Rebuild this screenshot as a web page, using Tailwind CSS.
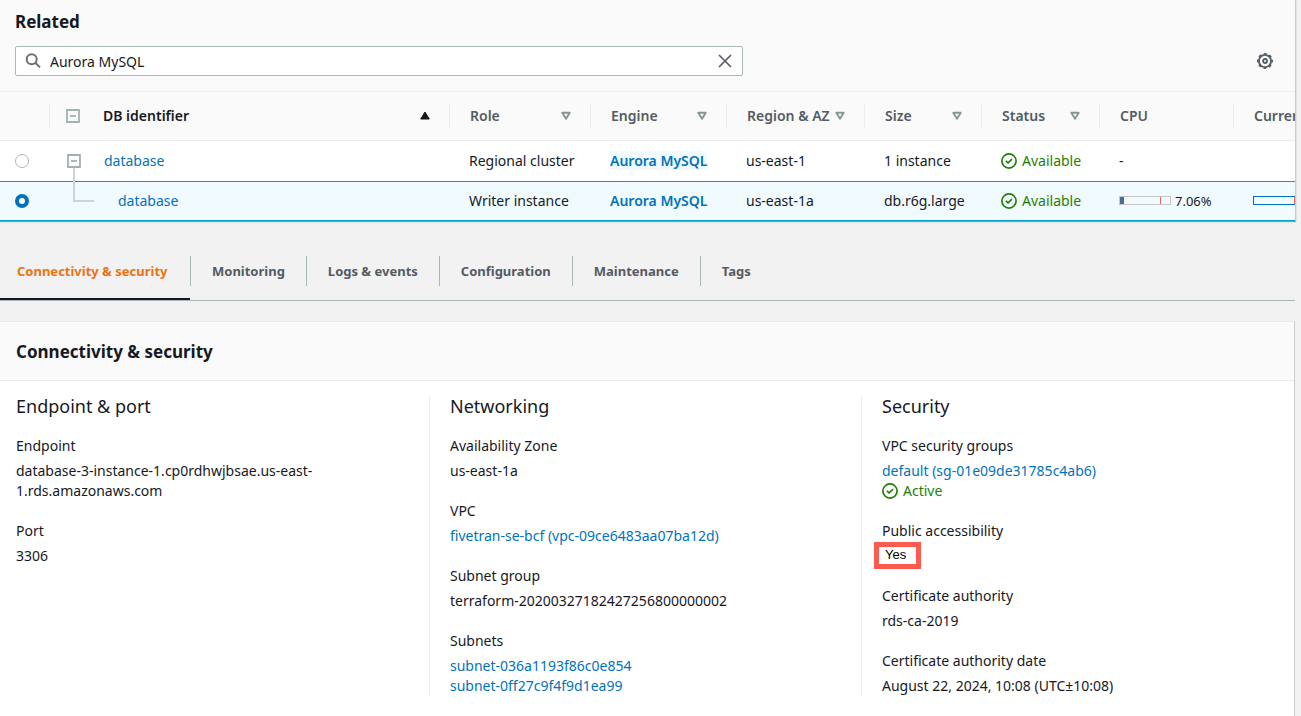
<!DOCTYPE html>
<html lang="en">
<head>
<meta charset="utf-8">
<title>RDS databases</title>
<meta name="viewport" content="width=device-width, initial-scale=1">
<script src="https://cdn.jsdelivr.net/npm/@tailwindcss/browser@4"></script>
</head>
<body class="min-h-screen overflow-x-hidden bg-[#f2f2f2] pr-[5px] font-['Noto_Sans','Open_Sans',sans-serif] text-sm leading-5 text-[#16191f]">
<svg class="hidden" aria-hidden="true">
  <symbol id="ok" viewBox="0 0 16 16"><circle cx="8" cy="8" r="7.1" fill="none" stroke="currentColor" stroke-width="1.7"/><path d="M4.8 7.8l2.3 2.1 3.9-3.7" fill="none" stroke="currentColor" stroke-width="1.6"/></symbol>
  <symbol id="sort" viewBox="0 0 10 9"><path d="M1.3 1.7h7.4L5 7.7z" fill="none" stroke="currentColor" stroke-width="1.9" stroke-linejoin="round"/></symbol>
  <symbol id="minus" viewBox="0 0 14 14"><path d="M1 1h12v12H1z" fill="none" stroke="currentColor" stroke-width="1.8"/><path d="M4 7h6" stroke="currentColor" stroke-width="1.8"/></symbol>
</svg>

<section class="overflow-hidden border-r border-[#c6cccd] bg-white shadow-[0_1px_1px_0_rgba(0,28,36,0.4)]">
  <header class="border-b border-[#eaeded] bg-[#fafafa] pt-2.5 pr-5 pb-[15px] pl-[15px]">
    <h2 class="text-[17px] leading-6 font-bold">Related</h2>
    <div class="mt-3 flex items-center justify-between">
      <div class="flex h-[30px] w-full max-w-[728px] items-center rounded-xs border border-[#aab7b8] bg-white pr-2.5 pl-[9px]">
        <svg class="size-4 shrink-0 text-[#687078]" viewBox="0 0 16 16" fill="none" stroke="currentColor" stroke-width="2"><circle cx="6.7" cy="6.2" r="5"/><path d="M10.3 9.8l4.7 4.6"/></svg>
        <input type="text" aria-label="Filter databases" value="Aurora MySQL" class="ml-[9px] h-full min-w-0 grow bg-transparent pt-px outline-none">
        <button aria-label="Clear filter" class="text-[#545b64]"><svg class="size-3.5" viewBox="0 0 14 14" fill="none" stroke="currentColor" stroke-width="1.6"><path d="M1 1l12 12M13 1L1 13"/></svg></button>
      </div>
      <button aria-label="Preferences" class="mr-0.5 text-[#545b64]"><svg class="size-4" viewBox="0 0 16 16" fill="none" stroke="currentColor"><circle cx="8" cy="8" r="6.1" stroke-width="1.9"/><circle cx="8" cy="8" r="7.3" stroke-width="1.4" stroke-dasharray="2.9 2.833" stroke-dashoffset="1.45"/><circle cx="8" cy="8" r="2" stroke-width="1.8"/></svg></button>
    </div>
  </header>
  <table class="w-[1400px] table-fixed border-collapse text-left whitespace-nowrap">
    <colgroup><col class="w-[49px]"><col class="w-[400px]"><col class="w-[141px]"><col class="w-[136px]"><col class="w-[138px]"><col class="w-[117px]"><col class="w-[118px]"><col class="w-[134px]"><col></colgroup>
    <thead class="border-b border-[#eaeded] bg-[#fafafa] text-[#545b64]">
      <tr class="h-12 *:font-semibold">
        <th class="p-0" aria-label="Selection"></th>
        <th class="p-0"><div class="flex h-6 items-center border-l border-[#eaeded] pr-[19px] pl-4 text-[#16191f]"><button aria-label="Collapse all" class="text-[#a3b1b2]"><svg class="size-3.5"><use href="#minus"/></svg></button><span class="ml-[23px] grow">DB identifier</span><svg class="h-[9px] w-2.5" viewBox="0 0 10 9"><path d="M5 1l4.3 7H.7z" fill="currentColor" stroke="currentColor" stroke-linejoin="round"/></svg></div></th>
        <th class="p-0"><div class="flex h-6 items-center justify-between border-l border-[#eaeded] pr-[19px] pl-5">Role<svg class="h-[9px] w-2.5 text-[#879596]"><use href="#sort"/></svg></div></th>
        <th class="p-0"><div class="flex h-6 items-center justify-between border-l border-[#eaeded] pr-[19px] pl-5">Engine<svg class="h-[9px] w-2.5 text-[#879596]"><use href="#sort"/></svg></div></th>
        <th class="p-0"><div class="flex h-6 items-center justify-between border-l border-[#eaeded] pr-[19px] pl-5">Region &amp; AZ<svg class="h-[9px] w-2.5 text-[#879596]"><use href="#sort"/></svg></div></th>
        <th class="p-0"><div class="flex h-6 items-center justify-between border-l border-[#eaeded] pr-[19px] pl-5">Size<svg class="h-[9px] w-2.5 text-[#879596]"><use href="#sort"/></svg></div></th>
        <th class="p-0"><div class="flex h-6 items-center justify-between border-l border-[#eaeded] pr-[19px] pl-5">Status<svg class="h-[9px] w-2.5 text-[#879596]"><use href="#sort"/></svg></div></th>
        <th class="p-0"><div class="flex h-6 items-center border-l border-[#eaeded] pl-5">CPU</div></th>
        <th class="p-0"><div class="flex h-6 items-center border-l border-[#eaeded] pl-5">Current activity</div></th>
      </tr>
    </thead>
    <tbody>
      <tr class="h-[41px]">
        <td class="p-0 pl-[15px]"><input type="radio" name="db" aria-label="Select cluster" class="block size-3.5 appearance-none rounded-full border border-[#aab7b8] bg-white"></td>
        <td class="p-0 pl-[18px]"><div class="flex items-center"><button aria-label="Collapse cluster" class="relative text-[#a3b1b2]"><svg class="size-3.5"><use href="#minus"/></svg><span class="absolute top-3.5 left-1.5 h-[34px] w-[21px] border-b-2 border-l-2 border-[#ccd5d5]"></span></button><a href="#" class="ml-[23px] text-[#0073bb]">database</a></div></td>
        <td class="p-0 pl-5">Regional cluster</td>
        <td class="p-0 pl-5"><a href="#" class="bg-[#f1faff] font-semibold text-[#0073bb]">Aurora MySQL</a></td>
        <td class="p-0 pl-5">us-east-1</td>
        <td class="p-0 pl-5">1 instance</td>
        <td class="p-0 pl-5"><div class="flex items-center gap-[5px] text-[#1d8102]"><svg class="size-4"><use href="#ok"/></svg>Available</div></td>
        <td class="p-0 pl-5">-</td>
        <td></td>
      </tr>
      <tr class="h-[39px] border-y border-[#00a1c9] bg-[#f1faff]">
        <td class="p-0 pl-[15px]"><input type="radio" name="db" checked aria-label="Select writer instance" class="block size-3.5 appearance-none rounded-full border-4 border-[#0073bb] bg-white"></td>
        <td class="p-0 pl-[69px]"><a href="#" class="text-[#0073bb]">database</a></td>
        <td class="p-0 pl-5">Writer instance</td>
        <td class="p-0 pl-5"><a href="#" class="font-semibold text-[#0073bb]">Aurora MySQL</a></td>
        <td class="p-0 pl-5">us-east-1a</td>
        <td class="p-0 pl-5">db.r6g.large</td>
        <td class="p-0 pl-5"><div class="flex items-center gap-[5px] text-[#1d8102]"><svg class="size-4"><use href="#ok"/></svg>Available</div></td>
        <td class="p-0 pl-5"><div class="flex items-center gap-1"><div class="flex h-[9px] w-[52px] justify-between border border-[#c6c6c6]"><span class="w-1 bg-[#486d96]"></span><span class="mr-[9px] w-px bg-[#f0625a]"></span></div><span class="text-[13px]">7.06%</span></div></td>
        <td class="p-0 pl-5"><div class="flex h-[9px] w-[52px] border border-[#0073bb]"><span class="ml-10 w-px bg-[#f0625a]"></span></div></td>
      </tr>
    </tbody>
  </table>
</section>

<nav class="mt-[23px] mr-px flex border-b border-[#aab7b8] pt-3 text-[13px] text-[#545b64]" aria-label="Database details">
  <a href="#" class="h-11 w-[190px] border-b-2 border-[#16191f] pl-[17px] leading-[30px] font-bold text-[#ec7211]">Connectivity &amp; security</a>
  <a href="#" class="h-[30px] border-l border-[#aab7b8] px-[21px] leading-[30px] font-bold">Monitoring</a>
  <a href="#" class="h-[30px] border-l border-[#aab7b8] px-[21px] leading-[30px] font-bold">Logs &amp; events</a>
  <a href="#" class="h-[30px] border-l border-[#aab7b8] px-[21px] leading-[30px] font-bold">Configuration</a>
  <a href="#" class="h-[30px] border-l border-[#aab7b8] px-[21px] leading-[30px] font-bold">Maintenance</a>
  <a href="#" class="h-[30px] border-l border-[#aab7b8] px-[21px] leading-[30px] font-bold">Tags</a>
</nav>

<section class="mt-5 mr-px border-t border-r border-t-[#eaeded] border-r-[#c6cccd] bg-white">
  <header class="border-b border-[#eaeded] bg-[#fafafa] px-4 pt-[19px] pb-[17px]"><h2 class="text-[17px] leading-[22px] font-bold">Connectivity &amp; security</h2></header>
  <div class="grid grid-cols-[429fr_432fr_433fr] pt-[15px] pb-5">
    <div class="pl-4">
      <h3 class="text-lg leading-5">Endpoint &amp; port</h3>
      <dl class="mt-5 flex flex-col gap-5">
        <div><dt>Endpoint</dt><dd class="mt-[5px]">database-3-instance-1.cp0rdhwjbsae.us-east-<br>1.rds.amazonaws.com</dd></div>
        <div><dt>Port</dt><dd class="mt-[5px]">3306</dd></div>
      </dl>
    </div>
    <div class="border-l border-[#eaeded] pl-5">
      <h3 class="text-lg leading-5">Networking</h3>
      <dl class="mt-5 flex flex-col gap-5">
        <div><dt>Availability Zone</dt><dd class="mt-[5px]">us-east-1a</dd></div>
        <div><dt>VPC</dt><dd class="mt-[5px]"><a href="#" class="text-[#0073bb]">fivetran-se-bcf (vpc-09ce6483aa07ba12d)</a></dd></div>
        <div><dt>Subnet group</dt><dd class="mt-[5px]">terraform-20200327182427256800000002</dd></div>
        <div><dt>Subnets</dt><dd class="mt-[5px] flex flex-col text-[#0073bb]"><a href="#">subnet-036a1193f86c0e854</a><a href="#">subnet-0ff27c9f4f9d1ea99</a></dd></div>
      </dl>
    </div>
    <div class="border-l border-[#eaeded] pl-5">
      <h3 class="text-lg leading-5">Security</h3>
      <dl class="mt-5 flex flex-col gap-5">
        <div><dt>VPC security groups</dt><dd class="mt-[5px]"><a href="#" class="text-[#0073bb]">default (sg-01e09de31785c4ab6)</a><div class="flex items-center gap-[5px] text-[#1d8102]"><svg class="size-4"><use href="#ok"/></svg>Active</div></dd></div>
        <div><dt>Public accessibility</dt><dd class="relative mt-[5px] h-5"><span class="absolute -top-1 -left-2 flex h-[27px] w-[47px] items-center border-5 border-[#fd5b4e] bg-white pl-1.5 font-['Liberation_Sans',sans-serif] text-[13px] text-black">Yes</span></dd></div>
        <div><dt>Certificate authority</dt><dd class="mt-[5px]">rds-ca-2019</dd></div>
        <div><dt>Certificate authority date</dt><dd class="mt-[5px]">August 22, 2024, 10:08 (UTC±10:08)</dd></div>
      </dl>
    </div>
  </div>
</section>
</body>
</html>
